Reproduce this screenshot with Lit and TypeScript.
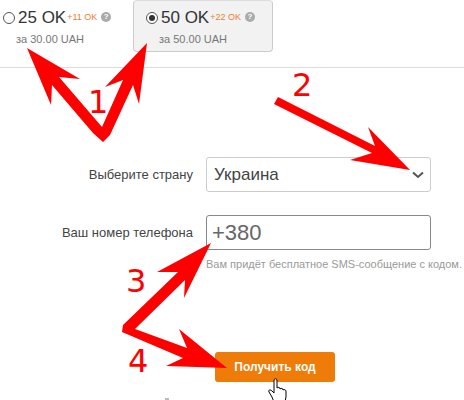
import { LitElement, css, html } from "lit";
import { customElement } from "lit/decorators.js";

@customElement("app-root")
export class AppRoot extends LitElement {
  static styles = css`
    :host {
      display: block;
      position: relative;
      width: 464px;
      height: 400px;
      overflow: hidden;
      background: #fff;
      font-family: "Liberation Sans", Arial, sans-serif;
      color: #333;
    }
    .packs {
      display: flex;
      height: 67px;
      border-bottom: 1px solid #ddd;
      padding-left: 3px;
      gap: 12px;
    }
    .pack {
      box-sizing: border-box;
      width: 118px;
      height: 52px;
      padding-top: 6px;
      white-space: nowrap;
    }
    .pack.selected {
      width: 140px;
      padding-left: 12px;
      background: #f2f2f2;
      border: 1px solid #ccc;
      border-top-color: #ddd;
      border-radius: 4px;
      padding-top: 5px;
    }
    .head {
      display: flex;
      align-items: center;
      height: 24px;
    }
    .radio {
      box-sizing: border-box;
      flex-shrink: 0;
      width: 12px;
      height: 12px;
      margin-right: 3px;
      border: 1px solid #555;
      border-radius: 50%;
      background: #fff;
      display: flex;
      align-items: center;
      justify-content: center;
    }
    .dot {
      width: 6px;
      height: 6px;
      border-radius: 50%;
      background: #333;
    }
    .count {
      font-size: 17px;
      color: #333;
    }
    .bonus {
      font-size: 9px;
      color: #f07c33;
      margin-left: 1px;
      margin-bottom: 2px;
    }
    .help {
      flex-shrink: 0;
      width: 10px;
      height: 10px;
      border-radius: 50%;
      background: #aaa;
      color: #fff;
      font-size: 8px;
      font-weight: bold;
      line-height: 10px;
      text-align: center;
      margin-left: 4px;
      margin-bottom: 2px;
    }
    .price {
      font-size: 11px;
      line-height: 14px;
      color: #777;
      margin: 2px 0 0 13px;
    }
    .form {
      display: grid;
      grid-template-columns: 193px 225px;
      column-gap: 13px;
      row-gap: 23px;
      padding-top: 89px;
      align-items: center;
    }
    label {
      text-align: right;
      font-size: 13px;
      color: #444;
    }
    .field {
      box-sizing: border-box;
      height: 35px;
      border: 1px solid #ccc;
      border-radius: 3px;
      display: flex;
      align-items: center;
      justify-content: space-between;
      padding: 0 6px 0 7px;
      font-size: 17px;
      color: #444;
    }
    .field.phone {
      border-color: #888;
      font-size: 22px;
      color: #666;
      padding-left: 5px;
    }
    .hint {
      grid-column: 2;
      margin-top: -18px;
      font-size: 11px;
      line-height: 14px;
      white-space: nowrap;
      color: #999;
    }
    .submit {
      display: block;
      width: 120px;
      height: 30px;
      margin: 79px 0 0 215px;
      border: 0;
      padding: 0;
      border-radius: 3px;
      background: #ef7b08;
      color: #fff;
      font: bold 12px "Liberation Sans", Arial, sans-serif;
    }
    .marks {
      position: absolute;
      inset: 0;
      width: 464px;
      height: 400px;
    }
    .marks text {
      font-family: "DejaVu Sans", sans-serif;
      font-size: 32px;
      fill: #f00;
    }
  `;

  private pack(count: string, bonus: string, price: string, selected = false) {
    return html`
      <div class="pack ${selected ? "selected" : ""}">
        <div class="head">
          <span class="radio">${selected ? html`<span class="dot"></span>` : ""}</span>
          <span class="count">${count}</span>
          <span class="bonus">${bonus}</span>
          <span class="help">?</span>
        </div>
        <div class="price">${price}</div>
      </div>
    `;
  }

  render() {
    return html`
      <div class="packs">
        ${this.pack("25 OK", "+11 OK", "за 30.00 UAH")}
        ${this.pack("50 OK", "+22 OK", "за 50.00 UAH", true)}
      </div>
      <div class="form">
        <label>Выберите страну</label>
        <div class="field">
          Украина
          <svg width="12" height="8" viewBox="0 0 12 8" fill="none" stroke="#555" stroke-width="2">
            <path d="M1 1.5l5 4.5 5-4.5" />
          </svg>
        </div>
        <label>Ваш номер телефона</label>
        <div class="field phone">+380</div>
        <div class="hint">Вам придёт бесплатное SMS-сообщение с кодом.</div>
      </div>
      <button class="submit">Получить код</button>
      <svg class="marks" viewBox="0 0 464 400">
        <polygon fill="#f00" points="27,48 80,79 59,77 102,127 123,80 105,87 147,43 139,104 133,85 110,135 103,142 93,133 52,85 51,105" />
        <polygon fill="#f00" points="278,97 375,146 368,127 410,170 350,160 372,153 274,104" />
        <polygon fill="#f00" points="211,243 184,298 185,280 135,329 187,348 179,329 227,368 166,366 183,358 122,332 123,325 178,272 157,272" />
        <text x="88" y="113">1</text>
        <text x="292" y="96">2</text>
        <text x="126" y="292">3</text>
        <text x="128" y="372">4</text>
        <path fill="#fff" stroke="#000" d="M274 402l-2-5-3-5c-1-2 1-3 3-1l2 2v-12c0-3 3-3 3 0v7c1-1 3-1 3 1 1-1 3-1 3 1 1-1 3 0 3 1v6l-1 5v3z" />
        <rect x="165" y="398" width="4" height="2" fill="#bbb" />
      </svg>
    `;
  }
}
